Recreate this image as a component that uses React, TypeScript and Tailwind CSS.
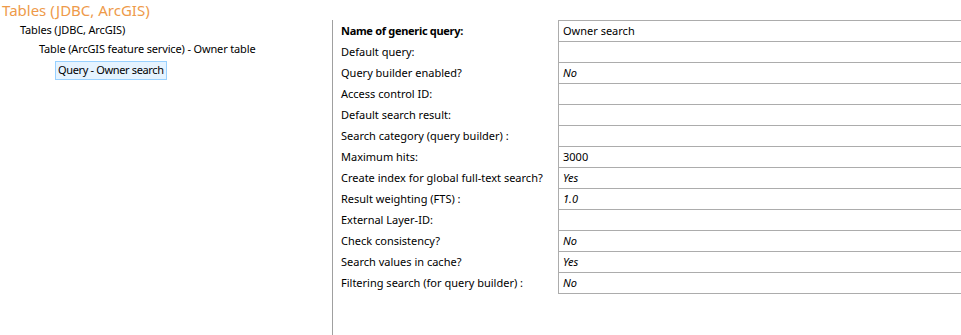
const rows: { label: string; value: string; bold?: boolean; italic?: boolean }[] = [
  { label: 'Name of generic query:', value: 'Owner search', bold: true },
  { label: 'Default query:', value: '' },
  { label: 'Query builder enabled?', value: 'No', italic: true },
  { label: 'Access control ID:', value: '' },
  { label: 'Default search result:', value: '' },
  { label: 'Search category (query builder) :', value: '' },
  { label: 'Maximum hits:', value: '3000' },
  { label: 'Create index for global full-text search?', value: 'Yes', italic: true },
  { label: 'Result weighting (FTS) :', value: '1.0', italic: true },
  { label: 'External Layer-ID:', value: '' },
  { label: 'Check consistency?', value: 'No', italic: true },
  { label: 'Search values in cache?', value: 'Yes', italic: true },
  { label: 'Filtering search (for query builder) :', value: 'No', italic: true },
];

export default function App() {
  return (
    <div className="flex flex-col w-[961px] h-[335px] bg-white text-black font-['Noto_Sans',sans-serif] text-[11px] overflow-hidden">
      <div className="h-[20px] pl-[2px] text-[15px] leading-[20px] text-[#ee9a4a]">Tables (JDBC, ArcGIS)</div>

      <div className="flex flex-grow">
        <div className="w-[333px] border-r border-[#a0a0a0] pt-[1px] tracking-[-0.15px]">
          <div className="flex items-center h-[19px] pl-[20px]">Tables (JDBC, ArcGIS)</div>
          <div className="flex items-center h-[19px] pl-[39px]">Table (ArcGIS feature service) - Owner table</div>
          <div className="flex items-center h-[21px] pl-[55px] pt-[1px]">
            <span className="flex items-center h-[19px] px-[2px] bg-[#e5f3ff] border border-[#99d1ff] tracking-[-0.35px]">
              Query - Owner search
            </span>
          </div>
        </div>

        <div className="flex flex-grow">
          <div className="w-[225px] pt-[1px]">
            {rows.map((r) => (
              <div
                key={r.label}
                className={`flex items-center h-[21px] pl-[8px] whitespace-nowrap ${r.bold ? 'font-bold tracking-[-0.3px]' : ''}`}
              >
                {r.label}
              </div>
            ))}
          </div>
          <div className="flex-grow self-start border-t border-l border-[#acacac]">
            {rows.map((r) => (
              <div
                key={r.label}
                className={`flex items-center h-[21px] pl-[4px] border-b border-[#acacac] ${r.italic ? 'italic' : ''}`}
              >
                {r.value}
              </div>
            ))}
          </div>
        </div>
      </div>
    </div>
  );
}
